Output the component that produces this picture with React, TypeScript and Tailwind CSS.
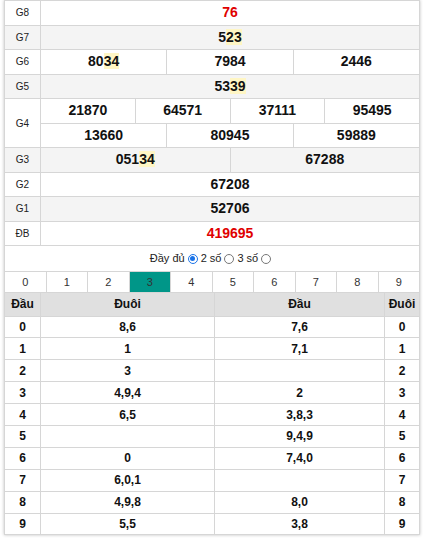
import React from "react";

const F = { fontFamily: '"Liberation Sans", Arial, sans-serif' };

function Num({ v, hl, red }: { v: string; hl?: boolean; red?: boolean }) {
  if (red) return <span className="text-[#e00000]">{v}</span>;
  if (!hl) return <span>{v}</span>;
  return (
    <span>
      {v.slice(0, v.length - 2)}
      <span className="bg-[#fff6c4]">{v.slice(-2)}</span>
    </span>
  );
}

function Cells({ items, hl, red }: { items: string[]; hl?: number; red?: boolean }) {
  return (
    <div className="flex flex-1 h-full">
      {items.map((v, i) => (
        <div
          key={i}
          className="flex-1 flex items-center justify-center border-r border-[#d6d6d6] last:border-r-0 text-[14px] font-bold text-[#111]"
        >
          <Num v={v} hl={hl === i} red={red} />
        </div>
      ))}
    </div>
  );
}

function PrizeRow({
  label,
  items,
  gray,
  hl,
  red,
}: {
  label: string;
  items: string[];
  gray?: boolean;
  hl?: number;
  red?: boolean;
}) {
  return (
    <div className={`flex h-[24.5px] border-b border-[#d6d6d6] ${gray ? "bg-[#f4f4f4]" : "bg-white"}`}>
      <div className="w-[36px] shrink-0 flex items-center justify-center border-r border-[#d6d6d6] text-[10px] text-[#222]">
        {label}
      </div>
      <Cells items={items} hl={hl} red={red} />
    </div>
  );
}

const dau = ["8,6", "1", "3", "4,9,4", "6,5", "", "0", "6,0,1", "4,9,8", "5,5"];
const duoi = ["7,6", "7,1", "", "2", "3,8,3", "9,4,9", "7,4,0", "", "8,0", "3,8"];

function Radio({ on }: { on?: boolean }) {
  return on ? (
    <span className="inline-flex w-[10px] h-[10px] rounded-full border-[1.5px] border-[#1a73e8] items-center justify-center mx-[3px]">
      <span className="w-[5px] h-[5px] rounded-full bg-[#1a73e8]" />
    </span>
  ) : (
    <span className="inline-block w-[10px] h-[10px] rounded-full border border-[#777] mx-[3px]" />
  );
}

export default function App() {
  return (
    <div style={F} className="bg-white w-[426px] h-[542px] pt-0">
      <div className="ml-[4px] w-[416px] border border-[#d6d6d6] border-b-0 shadow-[0_0_3px_rgba(0,0,0,0.25)] bg-white">
        <PrizeRow label="G8" items={["76"]} red />
        <PrizeRow label="G7" items={["523"]} gray hl={0} />
        <PrizeRow label="G6" items={["8034", "7984", "2446"]} hl={0} />
        <PrizeRow label="G5" items={["5339"]} gray hl={0} />
        <div className="flex h-[49px] border-b border-[#d6d6d6] bg-white">
          <div className="w-[36px] shrink-0 flex items-center justify-center border-r border-[#d6d6d6] text-[10px] text-[#222]">
            G4
          </div>
          <div className="flex-1 flex flex-col">
            <div className="h-[24.5px] border-b border-[#d6d6d6]">
              <Cells items={["21870", "64571", "37111", "95495"]} />
            </div>
            <div className="flex-1">
              <Cells items={["13660", "80945", "59889"]} />
            </div>
          </div>
        </div>
        <PrizeRow label="G3" items={["05134", "67288"]} gray hl={0} />
        <PrizeRow label="G2" items={["67208"]} />
        <PrizeRow label="G1" items={["52706"]} gray />
        <PrizeRow label="ĐB" items={["419695"]} red />

        <div className="h-[26px] flex items-center justify-center text-[11px] text-[#222] border-b border-[#d6d6d6]">
          <span>Đầy đủ</span>
          <Radio on />
          <span>2 số</span>
          <Radio />
          <span>3 số</span>
          <Radio />
        </div>

        <div className="flex h-[21px] border-b border-[#d6d6d6]">
          {Array.from({ length: 10 }, (_, i) => (
            <div
              key={i}
              className={`flex-1 flex items-center justify-center text-[11px] text-[#333] border-r border-[#d6d6d6] last:border-r-0 ${
                i === 3 ? "bg-[#009688]" : "bg-white"
              }`}
            >
              {i}
            </div>
          ))}
        </div>

        <div className="flex h-[23.5px] border-b border-[#d6d6d6] bg-[#e0e0e0] text-[12px] font-bold text-[#111]">
          <div className="w-[36px] flex items-center justify-center border-r border-[#d6d6d6]">Đầu</div>
          <div className="w-[174px] flex items-center justify-center border-r border-[#d6d6d6]">Đuôi</div>
          <div className="w-[170px] flex items-center justify-center border-r border-[#d6d6d6]">Đầu</div>
          <div className="flex-1 flex items-center justify-center">Đuôi</div>
        </div>

        {dau.map((d, i) => (
          <div key={i} className="flex h-[21.9px] border-b border-[#d6d6d6] bg-white text-[12px] font-bold text-[#111]">
            <div className="w-[36px] flex items-center justify-center border-r border-[#d6d6d6]">{i}</div>
            <div className="w-[174px] flex items-center justify-center border-r border-[#d6d6d6]">{d}</div>
            <div className="w-[170px] flex items-center justify-center border-r border-[#d6d6d6]">{duoi[i]}</div>
            <div className="flex-1 flex items-center justify-center">{i}</div>
          </div>
        ))}
      </div>
    </div>
  );
}
